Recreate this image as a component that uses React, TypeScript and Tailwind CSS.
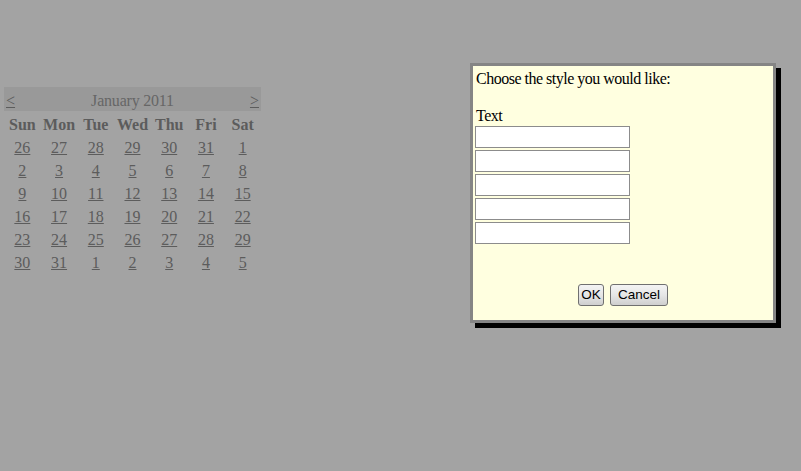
import React from "react";

const DAYS = ["Sun", "Mon", "Tue", "Wed", "Thu", "Fri", "Sat"];

const WEEKS = [
  [26, 27, 28, 29, 30, 31, 1],
  [2, 3, 4, 5, 6, 7, 8],
  [9, 10, 11, 12, 13, 14, 15],
  [16, 17, 18, 19, 20, 21, 22],
  [23, 24, 25, 26, 27, 28, 29],
  [30, 31, 1, 2, 3, 4, 5],
];

function Calendar() {
  return (
    <div className="w-[257px] text-[16px] text-[#5c5c5c]">
      {/* Month bar */}
      <div className="flex h-[24px] items-center justify-between bg-[#999999] px-[2px] pt-[4px] leading-none">
        <a href="#" className="underline">&lt;</a>
        <span className="tracking-[-0.2px] text-[#666666]">January 2011</span>
        <a href="#" className="underline">&gt;</a>
      </div>

      {/* Day names */}
      <div className="grid h-[23px] grid-cols-7 items-center pt-[2px] font-bold">
        {DAYS.map((d) => (
          <span key={d} className="text-center">{d}</span>
        ))}
      </div>

      {/* Dates */}
      {WEEKS.map((week, i) => (
        <div key={i} className="grid h-[23px] grid-cols-7 items-center pt-[2px]">
          {week.map((n, j) => (
            <a key={j} href="#" className="text-center underline">{n}</a>
          ))}
        </div>
      ))}
    </div>
  );
}

function StyleDialog() {
  return (
    <div className="absolute left-[470px] top-[63px] flex h-[260px] w-[306px] flex-col border-[3px] border-[#858585] bg-[#ffffe0] px-[2px] pt-[4px] text-[16px] leading-[18.5px] tracking-[-0.5px] text-black shadow-[5px_5px_0_#000]">
      <p className="pl-[1px]">Choose the style you would like:</p>
      <p className="h-[18.5px]" />
      <p className="pl-[1px]">Text</p>

      <div className="mt-[0.5px] flex flex-col gap-[2px]">
        {Array.from({ length: 5 }).map((_, i) => (
          <input
            key={i}
            type="text"
            className="h-[22px] w-[155px] border border-[#8c8c8c] bg-white px-1 outline-none"
          />
        ))}
      </div>

      <div className="mt-[40px] flex justify-center gap-[6px] font-['Liberation_Sans',Arial,sans-serif] text-[13.5px] leading-none tracking-normal">
        <button className="h-[22px] w-[26px] rounded-[3px] border border-[#707070] bg-gradient-to-b from-[#f4f4f4] via-[#e6e6e6] to-[#cfcfcf] text-black">
          OK
        </button>
        <button className="h-[22px] w-[58px] rounded-[3px] border border-[#707070] bg-gradient-to-b from-[#f4f4f4] via-[#e6e6e6] to-[#cfcfcf] text-black">
          Cancel
        </button>
      </div>
    </div>
  );
}

export default function App() {
  return (
    <div className="relative h-[471px] w-[801px] overflow-hidden bg-[#a3a3a3] font-['Liberation_Serif','Times_New_Roman',serif]">
      <div className="pl-[4px] pt-[87px]">
        <Calendar />
      </div>
      <StyleDialog />
    </div>
  );
}
